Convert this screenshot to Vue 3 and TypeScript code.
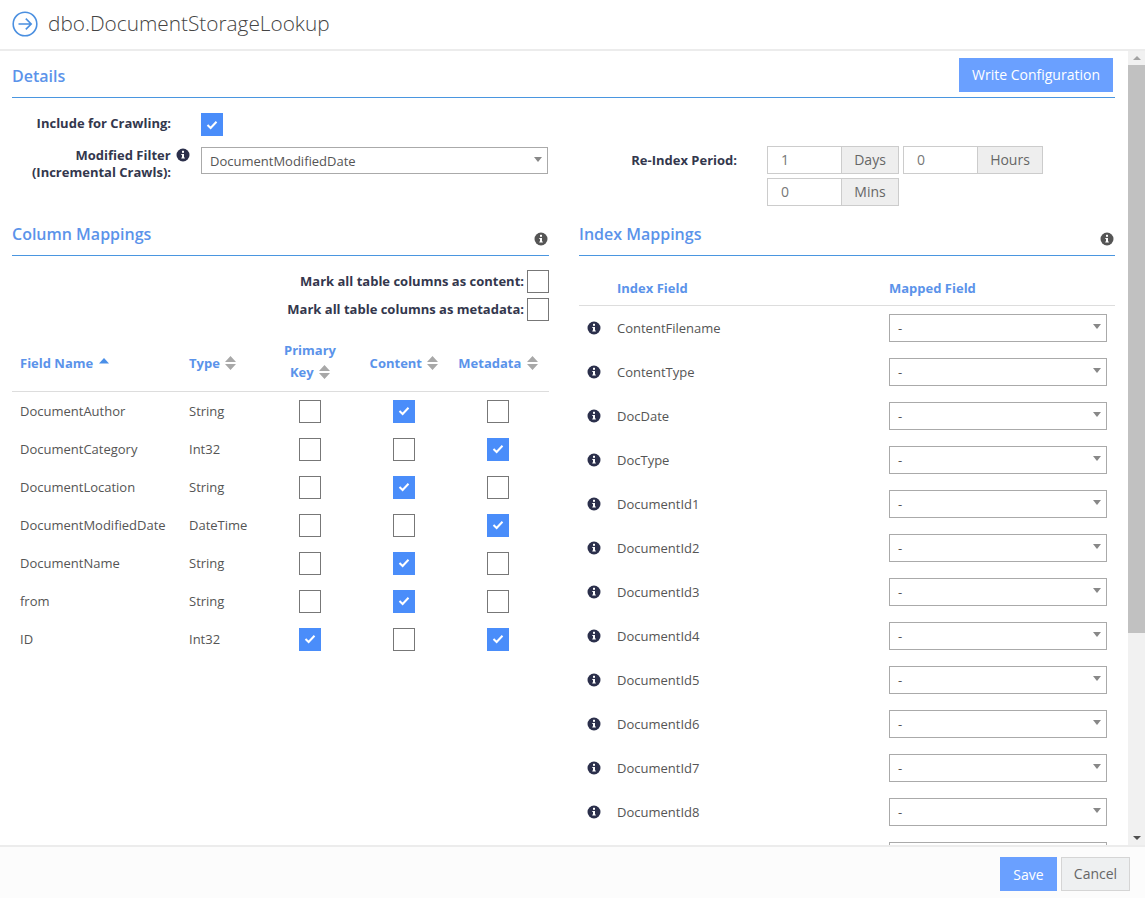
<script setup lang="ts">
interface ColumnRow {
  name: string
  type: string
  primary: boolean
  content: boolean
  metadata: boolean
}

const columns: ColumnRow[] = [
  { name: 'DocumentAuthor', type: 'String', primary: false, content: true, metadata: false },
  { name: 'DocumentCategory', type: 'Int32', primary: false, content: false, metadata: true },
  { name: 'DocumentLocation', type: 'String', primary: false, content: true, metadata: false },
  { name: 'DocumentModifiedDate', type: 'DateTime', primary: false, content: false, metadata: true },
  { name: 'DocumentName', type: 'String', primary: false, content: true, metadata: false },
  { name: 'from', type: 'String', primary: false, content: true, metadata: false },
  { name: 'ID', type: 'Int32', primary: true, content: false, metadata: true },
]

const indexFields = [
  'ContentFilename',
  'ContentType',
  'DocDate',
  'DocType',
  'DocumentId1',
  'DocumentId2',
  'DocumentId3',
  'DocumentId4',
  'DocumentId5',
  'DocumentId6',
  'DocumentId7',
  'DocumentId8',
]
</script>

<template>
  <div class="dialog">
    <header class="top">
      <svg class="go" width="26" height="26" viewBox="0 0 26 26" fill="none" stroke="#4a8fe0" stroke-width="1.6">
        <circle cx="13" cy="13" r="11.8" />
        <path d="M6.5 13H19M13.8 7.6 19.2 13l-5.4 5.4" />
      </svg>
      <h1>dbo.DocumentStorageLookup</h1>
    </header>

    <div class="middle">
      <main class="content">
        <div class="section-head details-head">
          <h2>Details</h2>
          <button class="btn primary write">Write Configuration</button>
        </div>

        <div class="details">
          <div class="details-left">
            <div class="form-row include">
              <div class="lbl">Include for Crawling:</div>
              <span class="cb on">
                <svg width="12" height="10" viewBox="0 0 12 10" fill="none" stroke="#fff" stroke-width="2"><path d="M1.5 5 4.6 8 10.5 1.8" /></svg>
              </span>
            </div>
            <div class="form-row">
              <div class="lbl filter-lbl">
                <span>Modified Filter
                  <svg class="info" width="14" height="14" viewBox="0 0 14 14">
                    <circle cx="7" cy="7" r="6.5" fill="#2b2f4b" />
                    <rect x="6" y="2.8" width="2" height="2" fill="#fff" />
                    <path d="M5.3 5.9H8v3.5h.8v1H5.3v-1H6V6.9h-.7z" fill="#fff" />
                  </svg>
                </span>
                <span>(Incremental Crawls):</span>
              </div>
              <div class="select wide">DocumentModifiedDate<i class="caret"></i></div>
            </div>
          </div>

          <div class="details-right">
            <div class="lbl period-lbl">Re-Index Period:</div>
            <div class="period">
              <div class="group"><span class="num">1</span><span class="addon days">Days</span></div>
              <div class="group"><span class="num">0</span><span class="addon hours">Hours</span></div>
              <div class="group"><span class="num">0</span><span class="addon days">Mins</span></div>
            </div>
          </div>
        </div>

        <div class="mappings">
          <section class="col-left">
            <div class="section-head map-head">
              <h2>Column Mappings</h2>
              <svg class="info head-info" width="14" height="14" viewBox="0 0 14 14">
                <circle cx="7" cy="7" r="6.5" fill="#555" />
                <rect x="6" y="2.8" width="2" height="2" fill="#fff" />
                <path d="M5.3 5.9H8v3.5h.8v1H5.3v-1H6V6.9h-.7z" fill="#fff" />
              </svg>
            </div>

            <div class="mark-all">
              <div class="mark"><span class="lbl">Mark all table columns as content:</span><span class="cb"></span></div>
              <div class="mark"><span class="lbl">Mark all table columns as metadata:</span><span class="cb"></span></div>
            </div>

            <div class="col-grid col-header">
              <div class="th single">Field Name <svg class="sort" width="10" height="6" viewBox="0 0 10 6"><path d="M5 0 10 5.5H0z" fill="#4a8fe8" /></svg></div>
              <div class="th single">Type <svg class="sort" width="11" height="14" viewBox="0 0 11 14"><path d="M5.5 0 11 6H0zM5.5 14 0 8h11z" fill="#a8a8a8" /></svg></div>
              <div class="th center">Primary<br />Key <svg class="sort" width="11" height="14" viewBox="0 0 11 14"><path d="M5.5 0 11 6H0zM5.5 14 0 8h11z" fill="#a8a8a8" /></svg></div>
              <div class="th single center">Content <svg class="sort" width="11" height="14" viewBox="0 0 11 14"><path d="M5.5 0 11 6H0zM5.5 14 0 8h11z" fill="#a8a8a8" /></svg></div>
              <div class="th single center last">Metadata <svg class="sort" width="11" height="14" viewBox="0 0 11 14"><path d="M5.5 0 11 6H0zM5.5 14 0 8h11z" fill="#a8a8a8" /></svg></div>
            </div>

            <div v-for="row in columns" :key="row.name" class="col-grid col-row">
              <div class="cell">{{ row.name }}</div>
              <div class="cell">{{ row.type }}</div>
              <div class="cell center">
                <span class="cb" :class="{ on: row.primary }">
                  <svg v-if="row.primary" width="12" height="10" viewBox="0 0 12 10" fill="none" stroke="#fff" stroke-width="2"><path d="M1.5 5 4.6 8 10.5 1.8" /></svg>
                </span>
              </div>
              <div class="cell center">
                <span class="cb" :class="{ on: row.content }">
                  <svg v-if="row.content" width="12" height="10" viewBox="0 0 12 10" fill="none" stroke="#fff" stroke-width="2"><path d="M1.5 5 4.6 8 10.5 1.8" /></svg>
                </span>
              </div>
              <div class="cell center last">
                <span class="cb" :class="{ on: row.metadata }">
                  <svg v-if="row.metadata" width="12" height="10" viewBox="0 0 12 10" fill="none" stroke="#fff" stroke-width="2"><path d="M1.5 5 4.6 8 10.5 1.8" /></svg>
                </span>
              </div>
            </div>
          </section>

          <section class="col-right">
            <div class="section-head map-head">
              <h2>Index Mappings</h2>
              <svg class="info head-info" width="14" height="14" viewBox="0 0 14 14">
                <circle cx="7" cy="7" r="6.5" fill="#555" />
                <rect x="6" y="2.8" width="2" height="2" fill="#fff" />
                <path d="M5.3 5.9H8v3.5h.8v1H5.3v-1H6V6.9h-.7z" fill="#fff" />
              </svg>
            </div>

            <div class="idx-grid idx-header">
              <div></div>
              <div class="th">Index Field</div>
              <div class="th">Mapped Field</div>
            </div>

            <div v-for="field in indexFields" :key="field" class="idx-grid idx-row">
              <svg class="info" width="14" height="14" viewBox="0 0 14 14">
                <circle cx="7" cy="7" r="6.5" fill="#2b2f4b" />
                <rect x="6" y="2.8" width="2" height="2" fill="#fff" />
                <path d="M5.3 5.9H8v3.5h.8v1H5.3v-1H6V6.9h-.7z" fill="#fff" />
              </svg>
              <div class="cell">{{ field }}</div>
              <div class="select narrow">-<i class="caret"></i></div>
            </div>

            <!-- next row is below the fold, only the top of its select shows -->
            <div class="idx-grid idx-row">
              <div></div>
              <div></div>
              <div class="select narrow"></div>
            </div>
          </section>
        </div>
      </main>

      <div class="scrollbar">
        <span class="arrow up"></span>
        <span class="thumb"></span>
        <span class="track"></span>
        <span class="arrow down"></span>
      </div>
    </div>

    <footer class="bottom">
      <button class="btn primary">Save</button>
      <button class="btn cancel">Cancel</button>
    </footer>
  </div>
</template>

<style>
html,
body {
  margin: 0;
  background: #fff;
}
</style>

<style scoped>
.dialog {
  width: 1145px;
  height: 898px;
  display: flex;
  flex-direction: column;
  overflow: hidden;
  font-family: "Open Sans", "Liberation Sans", sans-serif;
  font-size: 13px;
  color: #555;
  background: #fff;
}

.top {
  height: 47px;
  flex: none;
  display: flex;
  align-items: center;
  gap: 10px;
  padding-left: 12px;
  padding-bottom: 2px;
  border-bottom: 2px solid #ececec;
}

.top h1 {
  margin: 0;
  padding-bottom: 2px;
  font-size: 20.8px;
  font-weight: 300;
  color: #444;
}

.middle {
  flex: 1;
  min-height: 0;
  display: flex;
}

.content {
  flex: 1;
  min-width: 0;
  overflow: hidden;
  padding: 0 13px 0 12px;
}

.scrollbar {
  width: 17px;
  flex: none;
  display: flex;
  flex-direction: column;
  background: #f1f1f1;
}

.thumb {
  height: 568px;
  background: #c1c1c1;
}

.track {
  flex: 1;
}

.arrow {
  height: 14px;
  flex: none;
  position: relative;
}

.arrow::after {
  content: "";
  position: absolute;
  left: 5px;
  top: 5px;
  border-left: 4px solid transparent;
  border-right: 4px solid transparent;
}

.arrow.up::after {
  border-bottom: 4px solid #a3a3a3;
}

.arrow.down::after {
  border-top: 4px solid #505050;
}

.section-head {
  display: flex;
  justify-content: space-between;
  border-bottom: 1px solid #4a96e0;
}

.section-head h2 {
  margin: 0;
  font-size: 16px;
  font-weight: 600;
  color: #5b93ea;
}

.details-head {
  height: 46px;
  align-items: center;
  padding-right: 2px;
}

.details-head h2 {
  padding-top: 4px;
}

.btn {
  border: 0;
  font-family: inherit;
  font-size: 14px;
  height: 34px;
  padding: 0;
}

.btn.primary {
  background: #6aa0ff;
  color: #fff;
  width: 57px;
}

.btn.write {
  width: 154px;
  margin-top: 2px;
  padding-bottom: 2px;
}

.btn.cancel {
  width: 69px;
  background: #eef0f1;
  border: 1px solid #d5d5d5;
  color: #666;
  padding-bottom: 2px;
}

.details {
  display: flex;
  height: 120px;
}

.details-left {
  width: 536px;
  padding-top: 15px;
  display: flex;
  flex-direction: column;
  gap: 11px;
}

.form-row {
  display: flex;
}

.include {
  align-items: center;
}

.include .lbl {
  padding-bottom: 4px;
}

.lbl {
  font-weight: 700;
  font-size: 13px;
  color: #33374d;
  white-space: nowrap;
}

.form-row .lbl {
  width: 159px;
  margin-right: 30px;
  text-align: right;
}

.filter-lbl {
  display: flex;
  flex-direction: column;
  line-height: 17px;
}

.filter-lbl .info {
  vertical-align: -2px;
  margin-left: 2px;
}

.filter-lbl span:first-child {
  margin-right: -19px;
}

.filter-lbl span:last-child {
  display: block;
}

.cb {
  width: 20px;
  height: 21px;
  flex: none;
  display: inline-flex;
  align-items: center;
  justify-content: center;
  border: 1px solid #777;
  background: #fff;
}

.cb.on {
  width: 22px;
  height: 23px;
  border: 0;
  background: #4a8dfa;
}

.select {
  position: relative;
  box-sizing: border-box;
  height: 28px;
  line-height: 27px;
  border: 1px solid #aaa;
  padding-left: 8px;
  background: #fff;
}

.select.wide {
  width: 347px;
  height: 27px;
  line-height: 26px;
}

.select.narrow {
  width: 218px;
  height: 28px;
}

.caret {
  position: absolute;
  right: 5px;
  top: 9px;
  border-left: 4.5px solid transparent;
  border-right: 4.5px solid transparent;
  border-top: 5px solid #888;
}

.details-right {
  display: flex;
  padding-top: 48px;
}

.period-lbl {
  width: 189px;
  text-align: right;
  line-height: 29px;
  margin-right: 30px;
  flex: none;
}

.period {
  width: 290px;
  display: flex;
  flex-wrap: wrap;
  gap: 4px;
  align-content: flex-start;
}

.group {
  display: flex;
  height: 28px;
  box-sizing: border-box;
  border: 1px solid #ccc;
}

.num {
  width: 73px;
  padding-left: 13px;
  box-sizing: border-box;
  line-height: 26px;
  font-size: 14px;
  color: #777;
}

.addon {
  box-sizing: border-box;
  border-left: 1px solid #ccc;
  background: #eee;
  text-align: center;
  line-height: 25px;
  color: #666;
  font-size: 14px;
}

.addon.days {
  width: 57px;
}

.addon.hours {
  width: 65px;
}

.mappings {
  display: flex;
  gap: 30px;
  align-items: flex-start;
}

.col-left {
  width: 537px;
  flex: none;
}

.col-right {
  width: 536px;
  flex: none;
}

.map-head {
  height: 37px;
  align-items: center;
}

.map-head h2 {
  padding-bottom: 6px;
}

.head-info {
  margin-top: 4px;
  margin-right: 1px;
}

.mark-all {
  padding-top: 14px;
  display: flex;
  flex-direction: column;
  gap: 5px;
}

.mark {
  display: flex;
  justify-content: flex-end;
  align-items: center;
  gap: 3px;
}

.mark .lbl {
  padding-bottom: 2px;
}

.col-grid {
  display: grid;
  grid-template-columns: 177px 74px 94px 94px 98px;
  align-items: center;
}

.col-header {
  height: 60px;
  padding-top: 10px;
  border-bottom: 1px solid #ddd;
}

.th {
  font-weight: 700;
  font-size: 13px;
  line-height: 22px;
  color: #5b93ea;
  white-space: nowrap;
}

.th.single {
  padding-top: 4px;
}

.col-grid > div:first-child {
  padding-left: 8px;
}

.center {
  text-align: center;
}

.last {
  padding-right: 4px;
}

.sort {
  vertical-align: -2px;
  margin-left: 2px;
}

.col-grid .th:first-child .sort {
  vertical-align: 4px;
}

.col-row {
  height: 38px;
}

.col-row .cb {
  vertical-align: middle;
}

.idx-grid {
  display: grid;
  grid-template-columns: 38px 272px 226px;
  align-items: center;
}

.idx-header {
  height: 50px;
  padding-top: 15px;
  box-sizing: border-box;
  border-bottom: 1px solid #ddd;
}

.idx-row {
  height: 44px;
}

.idx-row .info {
  margin-left: 8px;
}

.bottom {
  height: 53px;
  flex: none;
  box-sizing: border-box;
  border-top: 2px solid #ececec;
  background: #fcfcfc;
  display: flex;
  justify-content: flex-end;
  align-items: center;
  gap: 4px;
  padding-right: 15px;
  padding-top: 3px;
}
</style>
